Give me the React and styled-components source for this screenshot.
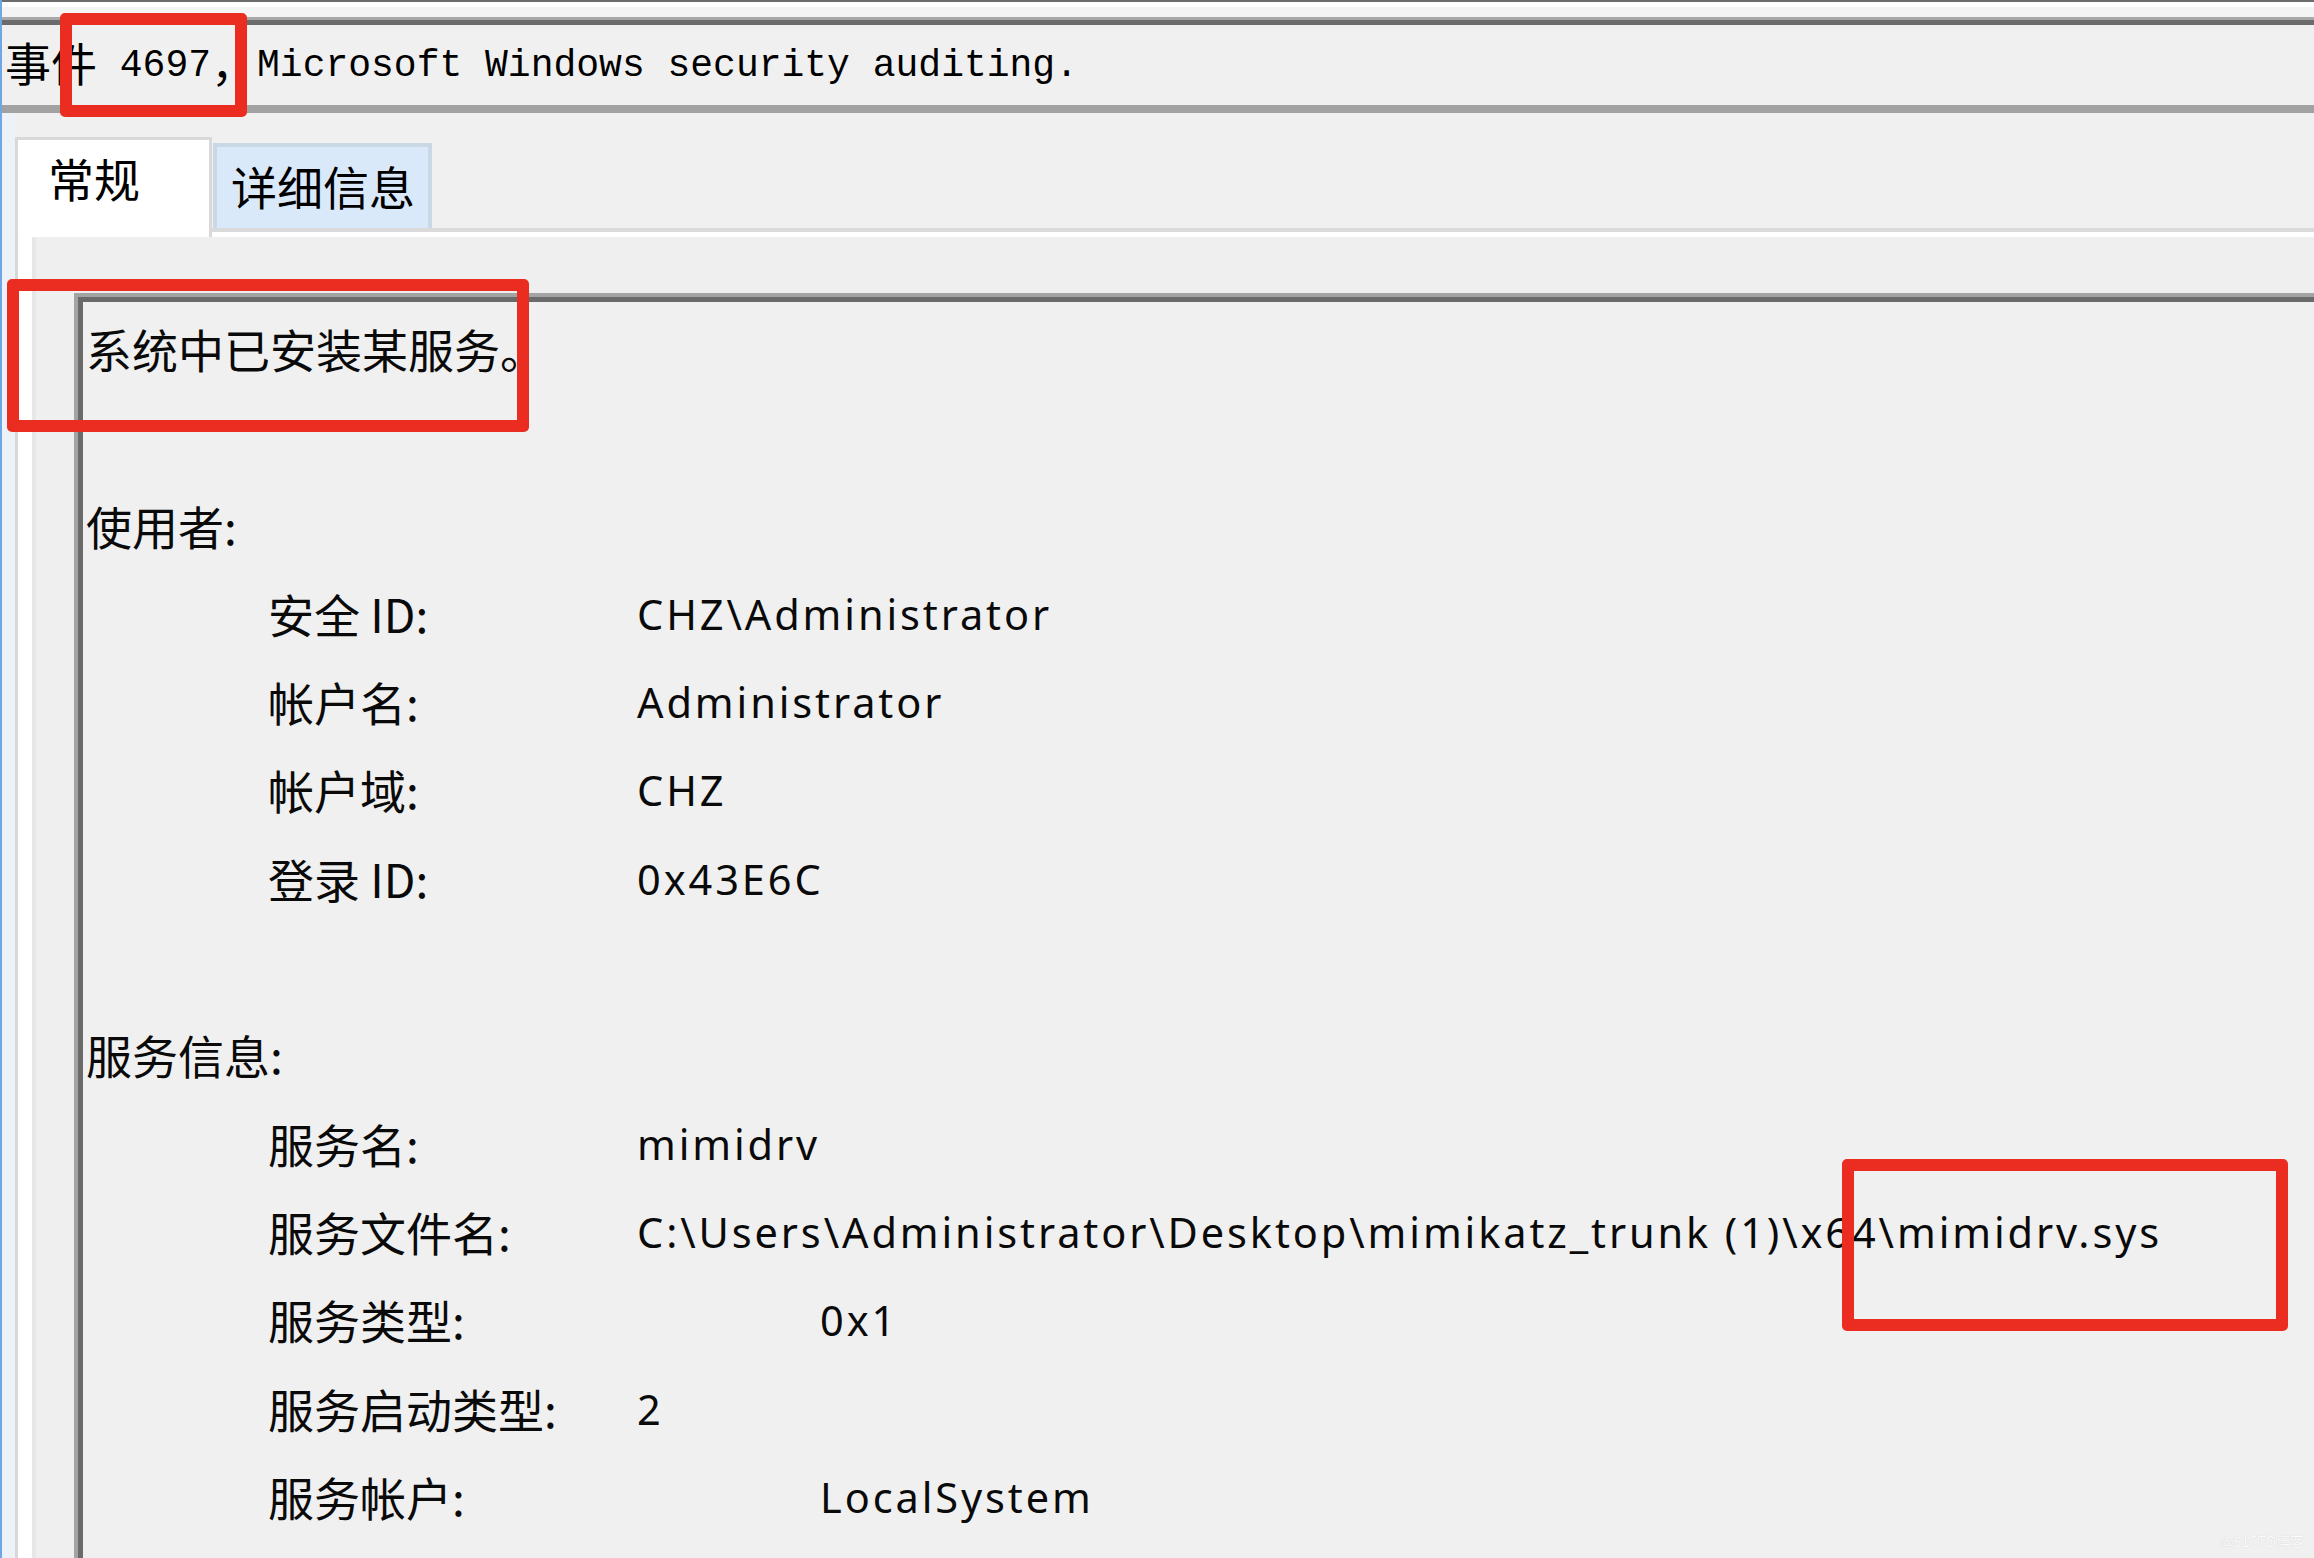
import React from "react";
import styled, { createGlobalStyle, css } from "styled-components";

const GlobalStyle = createGlobalStyle`
  html, body { margin: 0; padding: 0; background: #f0f0f0; }
  #root { width: 2314px; height: 1558px; }
`;

const Screen = styled.div`
  position: relative;
  width: 2314px;
  height: 1558px;
  box-sizing: border-box;
  overflow: hidden;
  display: flex;
  flex-direction: column;
  background: #f0f0f0;
  border-left: 2px solid #6fa7e6;
  font-family: "Noto Sans CJK SC", sans-serif;
  color: #000;
`;

const TopEdge = styled.div`
  flex: none;
  height: 17px;
  box-sizing: border-box;
  border-top: 2px solid #6c6c6c;
  background: linear-gradient(#ffffff 0 5px, #f4f4f4 5px);
`;

const TitleBox = styled.div`
  flex: none;
  height: 96px;
  box-sizing: border-box;
  border-top: 3px solid #a8a8a8;
  border-bottom: 8px solid #a2a2a2;
  box-shadow: inset 0 5px 0 #6b6b6b;
  padding: 3px 0 0 3px;
  font-family: "Liberation Mono", "Noto Sans CJK SC", monospace;
  font-size: 38px;
  line-height: 77px;
  white-space: pre;
  overflow: hidden;
`;

const Wide = styled.span`
  font-family: "Noto Sans CJK SC", sans-serif;
  font-size: 46px;
  vertical-align: -5px;
`;

const Body = styled.div`
  flex: 1;
  min-height: 0;
  display: flex;
  flex-direction: column;
  border-left: 13px solid #edf1f8;
`;

const TabStrip = styled.div`
  flex: none;
  height: 124px;
  box-sizing: border-box;
  display: flex;
  align-items: flex-end;
  margin-bottom: -9px;
  position: relative;
  z-index: 1;
`;

const Tab = styled.div`
  box-sizing: border-box;
  font-size: 46px;
  line-height: 46px;
  white-space: nowrap;
  color: #000;
  ${(p) =>
    p.$active
      ? css`
          width: 197px;
          height: 100px;
          background: #ffffff;
          border: 3px solid #d9d9d9;
          border-bottom: none;
          padding: 14px 0 0 30px;
        `
      : css`
          width: 219px;
          height: 85px;
          margin: 0 0 9px 1px;
          background: #dae9f9;
          border: 4px solid #cad7e4;
          border-bottom: none;
          padding: 15px 0 0 14px;
        `}
`;

const Panel = styled.div`
  flex: 1;
  min-height: 0;
  display: flex;
  background: #ffffff;
  border-top: 4px solid #dadada;
  border-left: 3px solid #d8d8d8;
  padding: 5px 0 0 14px;
`;

const PanelInner = styled.div`
  flex: 1;
  min-width: 0;
  display: flex;
  background: #efefef;
  border-left: 4px solid #e7e7e7;
  padding: 56px 0 0 38px;
`;

const TextFrame = styled.div`
  flex: 1;
  min-width: 0;
  display: flex;
  border-left: 4px solid #a3a3a3;
  border-top: 4px solid #a3a3a3;
  background: #f0f0f0;
`;

const TextArea = styled.div`
  flex: 1;
  min-width: 0;
  border-left: 5px solid #6a6a6a;
  border-top: 5px solid #6a6a6a;
  padding: 2px 0 0 3px;
`;

const Line = styled.div`
  height: 88.3px;
  display: flex;
  align-items: flex-start;
  white-space: pre;
  padding-left: ${(p) => (p.$indent ? 182 : 0)}px;
`;

const Label = styled.span`
  flex: none;
  font-family: "Noto Sans CJK SC", sans-serif;
  font-size: 46px;
  line-height: 88.3px;
  color: #0a0a0a;
  width: ${(p) => (p.$indent ? "369px" : "auto")};
`;

const Value = styled.span`
  font-family: "Noto Sans", "Noto Sans CJK SC", sans-serif;
  font-size: 41.5px;
  line-height: 88.3px;
  letter-spacing: 2.9px;
  color: #0a0a0a;
  padding-top: 1px;
  margin-left: ${(p) => (p.$tab ? 183 : 0)}px;
`;

const Mark = styled.div`
  position: absolute;
  box-sizing: border-box;
  border: 12px solid #ea2d20;
  border-radius: 5px;
  pointer-events: none;
  left: ${(p) => p.$x}px;
  top: ${(p) => p.$y}px;
  width: ${(p) => p.$w}px;
  height: ${(p) => p.$h}px;
`;

const Watermark = styled.div`
  position: absolute;
  right: 10px;
  bottom: 7px;
  font-family: "Noto Sans CJK SC", sans-serif;
  font-size: 14px;
  color: rgba(255, 255, 255, 0.95);
  text-shadow: 0 0 1px rgba(0, 0, 0, 0.18);
`;

const userRows = [
  { label: "安全 ID:", value: "CHZ\\Administrator" },
  { label: "帐户名:", value: "Administrator" },
  { label: "帐户域:", value: "CHZ" },
  { label: "登录 ID:", value: "0x43E6C" },
];

const serviceRows = [
  { label: "服务名:", value: "mimidrv" },
  {
    label: "服务文件名:",
    value: "C:\\Users\\Administrator\\Desktop\\mimikatz_trunk (1)\\x64\\mimidrv.sys",
  },
  { label: "服务类型:", value: "0x1", tab: true },
  { label: "服务启动类型:", value: "2" },
  { label: "服务帐户:", value: "LocalSystem", tab: true },
];

function Field({ label, value, tab }) {
  return (
    <Line $indent>
      <Label $indent>{label}</Label>
      <Value $tab={tab}>{value}</Value>
    </Line>
  );
}

export default function App() {
  return (
    <>
      <GlobalStyle />
      <Screen>
        <TopEdge />
        <TitleBox>
          <Wide>事件</Wide> 4697<Wide>，</Wide>Microsoft Windows security auditing.
        </TitleBox>
        <Body>
          <TabStrip>
            <Tab $active>常规</Tab>
            <Tab>详细信息</Tab>
          </TabStrip>
          <Panel>
            <PanelInner>
              <TextFrame>
                <TextArea>
                  <Line>
                    <Label>系统中已安装某服务。</Label>
                  </Line>
                  <Line />
                  <Line>
                    <Label>使用者:</Label>
                  </Line>
                  {userRows.map((r) => (
                    <Field key={r.label} {...r} />
                  ))}
                  <Line />
                  <Line>
                    <Label>服务信息:</Label>
                  </Line>
                  {serviceRows.map((r) => (
                    <Field key={r.label} {...r} />
                  ))}
                </TextArea>
              </TextFrame>
            </PanelInner>
          </Panel>
        </Body>
        <Mark $x={58} $y={13} $w={187} $h={104} />
        <Mark $x={5} $y={279} $w={522} $h={153} />
        <Mark $x={1840} $y={1159} $w={446} $h={172} />
        <Watermark>@51CTO博客</Watermark>
      </Screen>
    </>
  );
}
